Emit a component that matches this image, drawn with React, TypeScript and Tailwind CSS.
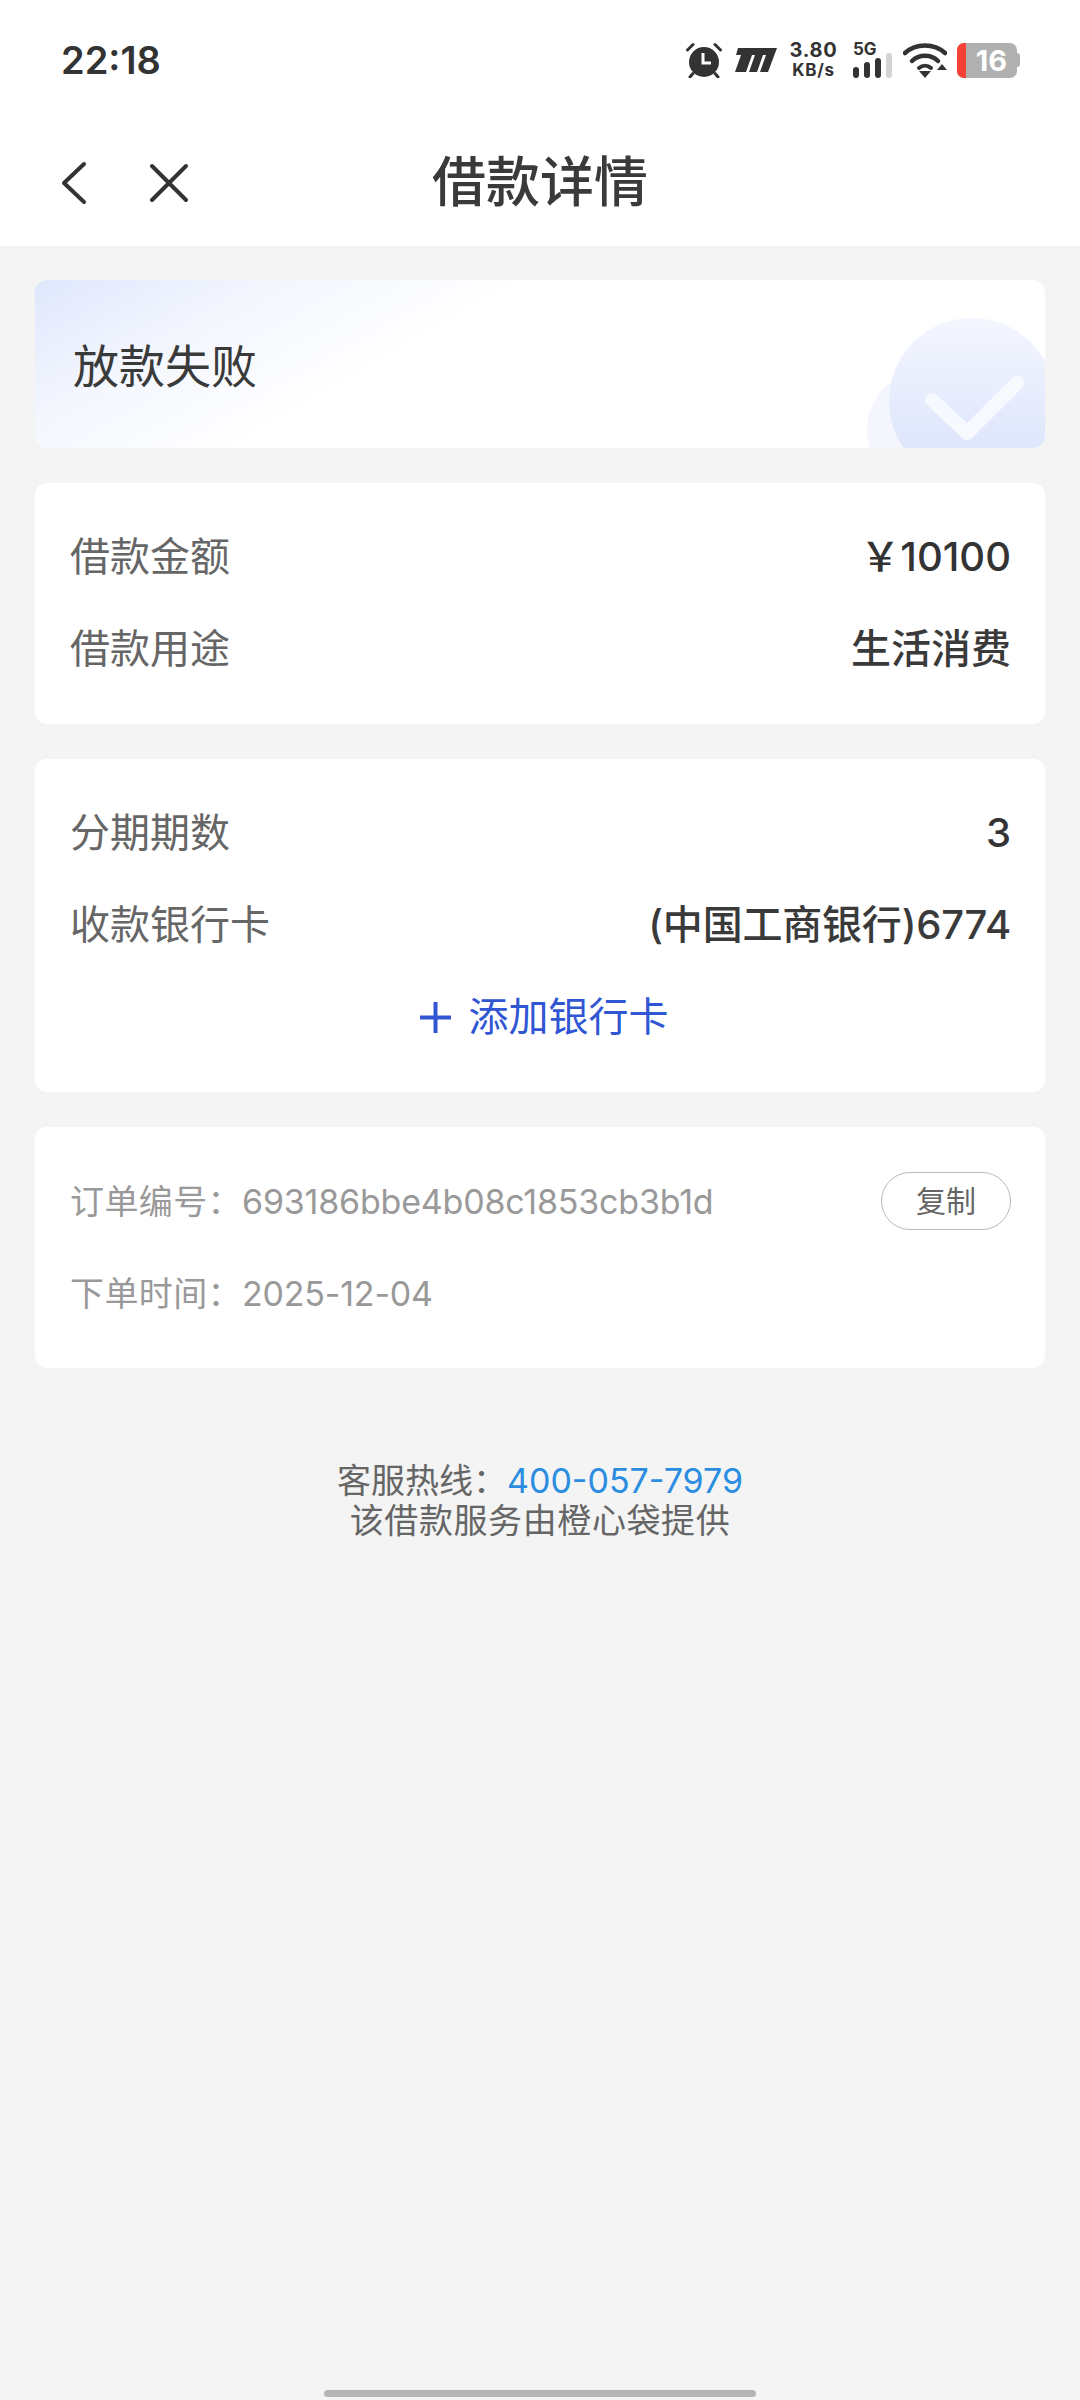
import type { ReactNode } from 'react'

const FONT = "font-['Inter','Noto_Sans_CJK_SC',sans-serif]"

function AlarmIcon() {
  return (
    <svg width="36" height="36" viewBox="0 0 36 36" fill="none">
      <circle cx="18" cy="20" r="15" fill="#333" />
      <path d="M17 11v10h8" stroke="#fff" strokeWidth="3" fill="none" />
      <path d="M1.500 8 7 2.500M34.500 8 29 2.500" stroke="#333" strokeWidth="3" strokeLinecap="round" />
      <path d="M7 31.500 4 35M29 31.500 32 35" stroke="#333" strokeWidth="3" strokeLinecap="round" />
    </svg>
  )
}

function CarrierLogo() {
  return (
    <svg width="42" height="24" viewBox="0 0 42 24" fill="#333">
      <path d="M3 0h39l-9 24h-8l6-17h-3l-6 17h-8l6-17h-3L11 24H0l6-17H1z" />
    </svg>
  )
}

function SignalBars() {
  return (
    <svg width="40" height="25" viewBox="0 0 40 25" fill="#333">
      <rect x="0" y="14" width="6" height="11" rx="3" />
      <rect x="11" y="9" width="6" height="16" rx="3" />
      <rect x="22" y="5" width="6" height="20" rx="3" />
      <rect x="33" y="0" width="6" height="25" rx="3" fill="#d4d4d4" />
    </svg>
  )
}

function WifiIcon() {
  return (
    <svg width="44" height="36" viewBox="0 0 44 36" fill="none">
      <path d="M2 11C13 1 31 1 42 11" stroke="#333" strokeWidth="4.500" strokeLinecap="round" />
      <path d="M9 19C16 12 28 12 35 19" stroke="#333" strokeWidth="4.500" strokeLinecap="round" />
      <path d="M16 26c3.500-3 8.500-3 12 0" stroke="#333" strokeWidth="4" strokeLinecap="round" />
      <path d="m16 29 h12l-6 7z" fill="#333" />
      <path d="m34 28 5-6 5 6z" fill="#333" />
    </svg>
  )
}

function Battery() {
  return (
    <div className="flex items-center">
      <div className="flex h-[35px] w-[60px] overflow-hidden rounded-[7px] bg-[#b0b0b0]">
        <div className="w-[9px] bg-[#f44336]" />
        <span className="flex-1 text-center text-[29px] leading-[35px] font-bold text-white">16</span>
      </div>
      <div className="h-[14px] w-[3px] rounded-r-sm bg-[#b0b0b0]" />
    </div>
  )
}

function StatusBar() {
  return (
    <div className="flex h-[120px] items-center justify-between pr-[60px] pl-[61px] text-[#333]">
      <span className="text-[38px] leading-none font-semibold">22:18</span>
      <div className="flex items-center">
        <AlarmIcon />
        <div className="ml-[13px]">
          <CarrierLogo />
        </div>
        <div className="ml-[13px] flex w-[47px] flex-col items-center text-[20px] leading-[20px] font-bold tracking-[0.7px]">
          <span>3.80</span>
          <span className="text-[17px]">KB/s</span>
        </div>
        <div className="ml-[16px] flex w-[40px] flex-col">
          <span className="h-[13px] text-[17px] leading-[13px] font-bold">5G</span>
          <div className="-mt-[3px]">
            <SignalBars />
          </div>
        </div>
        <div className="ml-[10px]">
          <WifiIcon />
        </div>
        <div className="ml-[10px]">
          <Battery />
        </div>
      </div>
    </div>
  )
}

function NavBar() {
  return (
    <div className="grid h-[126px] grid-cols-3 items-center">
      <div className="flex items-center pl-[60px]">
        <svg width="28" height="44" viewBox="0 0 28 44" fill="none">
          <path d="M24 3 4 22l20 19" stroke="#333" strokeWidth="4" strokeLinecap="round" strokeLinejoin="round" />
        </svg>
        <svg className="ml-[61px]" width="40" height="40" viewBox="0 0 40 40" fill="none">
          <path d="M3 3 37 37M37 3 3 37" stroke="#333" strokeWidth="4" strokeLinecap="round" />
        </svg>
      </div>
      <h1 className="text-center text-[54px] leading-none font-medium whitespace-nowrap text-[#3a3a3a]">借款详情</h1>
    </div>
  )
}

function Row({ label, children }: { label: string; children: ReactNode }) {
  return (
    <div className="flex h-[92px] items-center justify-between text-[40px]">
      <span className="text-[#666]">{label}</span>
      {children}
    </div>
  )
}

function StatusCard() {
  return (
    <div className="relative flex h-[167.5px] items-center overflow-hidden rounded-[12px] bg-[linear-gradient(150deg,#dfe7fd_0%,#f3f6fe_18%,#ffffff_38%)] pt-[5px] pl-[38px]">
      <span className="text-[46px] leading-none text-[#3a3a3a]">放款失败</span>
      <svg className="absolute right-0 bottom-0" width="180" height="130" viewBox="0 0 180 130" fill="none">
        <defs>
          <linearGradient id="badge" x1="0" y1="0" x2="0" y2="1">
            <stop offset="0" stopColor="#f3f6fe" />
            <stop offset="1" stopColor="#d9e2fc" />
          </linearGradient>
        </defs>
        <circle cx="62" cy="112" r="60" fill="#f4f5fd" />
        <circle cx="107" cy="83" r="83" fill="url(#badge)" />
        <path d="M67 82l35 33 50-50" stroke="#f7f9fe" strokeWidth="14" strokeLinecap="round" strokeLinejoin="round" />
      </svg>
    </div>
  )
}

export default function App() {
  return (
    <div className={`${FONT} relative flex min-h-[2400px] flex-col bg-[#f4f4f4]`}>
      <header className="h-[246px] bg-white">
        <StatusBar />
        <NavBar />
      </header>

      <main className="flex flex-col gap-[35px] px-[35px] pt-[34px]">
        <StatusCard />

        <section className="rounded-[12px] bg-white py-[28.5px] pr-[34px] pl-[35px]">
          <Row label="借款金额">
            <span className="font-[450] text-[#333]">￥10100</span>
          </Row>
          <Row label="借款用途">
            <span className="font-medium text-[#3a3a3a]">生活消费</span>
          </Row>
        </section>

        <section className="rounded-[12px] bg-white py-[28.5px] pr-[34px] pl-[35px]">
          <Row label="分期期数">
            <span className="font-[450] text-[#333]">3</span>
          </Row>
          <Row label="收款银行卡">
            <span className="font-medium tracking-[-0.2px] text-[#3a3a3a]">(中国工商银行)6774</span>
          </Row>
          <div className="flex h-[92px] items-center justify-center gap-[17px] pl-[6px] text-[40px] text-[#3156d3]">
            <svg width="33" height="33" viewBox="0 0 33 33" fill="none">
              <path d="M16.500 1v31M1 16.500h31" stroke="#3156d3" strokeWidth="4" />
            </svg>
            <span>添加银行卡</span>
          </div>
        </section>

        <section className="rounded-[12px] bg-white py-[28.5px] pr-[34px] pl-[35px] text-[34px] text-[#999]">
          <div className="flex h-[92px] items-center justify-between">
            <span className="tracking-[-0.2px]">
              <span className="tracking-[0.4px]">订单编号：</span>693186bbe4b08c1853cb3b1d
            </span>
            <button className="h-[58px] w-[130px] rounded-full border border-[#bbb] text-[30px] text-[#666]">复制</button>
          </div>
          <div className="flex h-[92px] items-center">
            <span className="tracking-[-0.2px]">
              <span className="tracking-[0.4px]">下单时间：</span>2025-12-04
            </span>
          </div>
        </section>
      </main>

      <footer className="mt-[93px] text-center text-[34px] leading-[40px] text-[#666]">
        <p>
          客服热线：<span className="text-[#2a8de0]">400-057-7979</span>
        </p>
        <p className="tracking-[0.6px]">该借款服务由橙心袋提供</p>
      </footer>

      <div className="absolute bottom-[3px] left-[324px] h-[7px] w-[432px] rounded-full bg-[#b5b5b5]" />
    </div>
  )
}
